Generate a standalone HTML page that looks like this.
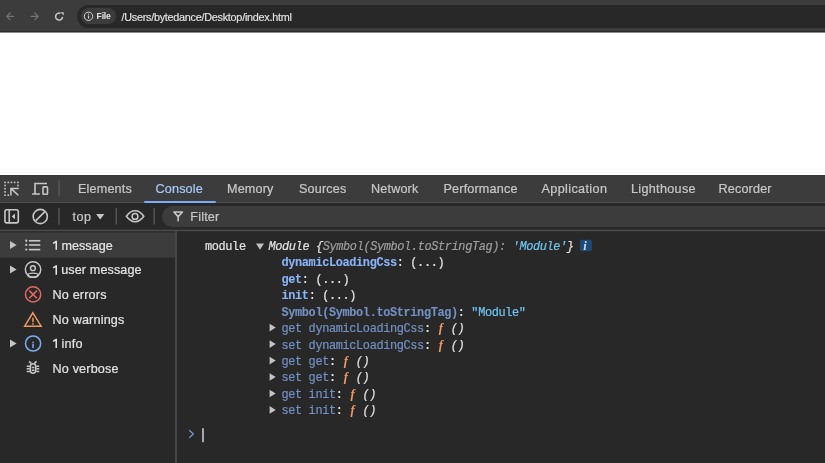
<!DOCTYPE html>
<html><head><meta charset="utf-8">
<style>
*{box-sizing:border-box}
html,body{margin:0;padding:0}
body{width:825px;height:463px;overflow:hidden;position:relative;background:#fff;font-family:"Liberation Sans",sans-serif}
#root{position:absolute;left:0;top:0;width:825px;height:463px;will-change:transform;background:#fff;overflow:hidden}
.a{position:absolute}
.t{position:absolute;white-space:pre;line-height:15px;font-size:12.6px;letter-spacing:0.18px;-webkit-text-stroke:0.22px currentColor}
.m{position:absolute;white-space:pre;font-family:"Liberation Mono",monospace;font-size:11.9px;letter-spacing:-0.355px;line-height:16px;color:#e3e3e3;-webkit-text-stroke:0.2px currentColor}
.m b{-webkit-text-stroke:0.1px currentColor}
.f{display:inline-block;width:6.4px;font-family:"Liberation Serif",serif;font-style:italic;font-weight:bold;font-size:12.5px;color:#f29766;text-align:center;-webkit-text-stroke:0}
svg{position:absolute;overflow:visible}
.n1{letter-spacing:-0.8px}
</style></head><body>
<div id="root">
<!-- chrome toolbar -->
<div class="a" style="left:0;top:0;width:825px;height:31px;background:#3c3c3c"></div>
<div class="a" style="left:0;top:31px;width:825px;height:2px;background:linear-gradient(#2a2a2a 0,#2a2a2a 50%,#8a8a8a 50%)"></div>
<svg style="left:0;top:0" width="80" height="32">
  <g fill="none" stroke="#747474" stroke-width="1.2" stroke-linecap="round" stroke-linejoin="round">
    <path d="M6.7 16.4H13.6M10.1 13L6.7 16.4L10.1 19.8"/>
    <path d="M31.3 16.4H38.2M34.8 13L38.2 16.4L34.8 19.8"/>
  </g>
  <g fill="none" stroke="#c7c7c7" stroke-width="1.5">
    <path d="M60.58 13.43A3.5 3.5 0 1 0 62.59 16.91"/>
  </g>
  <path d="M60.6 12.2H63.7V15.4Z" fill="#c7c7c7"/>
</svg>
<div class="a" style="left:77px;top:5px;width:800px;height:23px;border-radius:11.5px;background:#282828"></div>
<div class="a" style="left:81px;top:8.4px;width:35px;height:16px;border-radius:8px;background:#3c3c3c"></div>
<svg style="left:0;top:0" width="100" height="32">
  <circle cx="88.5" cy="16.3" r="4.2" fill="none" stroke="#d0d0d0" stroke-width="1"/>
  <rect x="88" y="15.6" width="1.1" height="3.1" fill="#d0d0d0"/>
  <rect x="88" y="13.6" width="1.1" height="1.1" fill="#d0d0d0"/>
</svg>
<div class="t" style="left:96.6px;top:10.6px;font-size:8.6px;letter-spacing:-0.2px;line-height:10px;font-weight:bold;color:#e3e3e3;-webkit-text-stroke:0">File</div>
<div class="t" style="left:121.5px;top:10.5px;font-size:10.8px;letter-spacing:-0.25px;line-height:12px;color:#e3e3e3;-webkit-text-stroke:0.15px currentColor">/Users/bytedance/Desktop/index.html</div>

<!-- devtools -->
<div class="a" style="left:0;top:175px;width:825px;height:288px;background:#282828"></div>
<div class="a" style="left:0;top:175px;width:825px;height:27px;background:#3c3c3c"></div>
<div class="a" style="left:0;top:172px;width:825px;height:1px;background:#f7f7f7"></div>
<div class="a" style="left:0;top:175px;width:825px;height:1px;background:#373737"></div>
<div class="a" style="left:0;top:202px;width:825px;height:1px;background:#4e4e4e"></div>
<div class="a" style="left:0;top:229px;width:825px;height:3px;background:linear-gradient(#333 0,#333 33%,#4b4b4b 33%,#4b4b4b 66%,#2e2e2e 66%)"></div>
<!-- tab icons -->
<svg style="left:0;top:175px" width="70" height="27">
  <g fill="#c7c7c7">
    <rect x="4.2" y="6.6" width="1.6" height="1.6"/><rect x="7.5" y="6.6" width="1.6" height="1.6"/><rect x="10.6" y="6.6" width="1.6" height="1.6"/><rect x="13.8" y="6.6" width="1.6" height="1.6"/><rect x="17.1" y="6.6" width="1.6" height="1.6"/>
    <rect x="4.2" y="9.7" width="1.6" height="1.6"/><rect x="4.2" y="12.9" width="1.6" height="1.6"/><rect x="4.2" y="16.1" width="1.6" height="1.6"/><rect x="4.2" y="19.4" width="1.6" height="1.6"/>
    <rect x="7.5" y="19.4" width="1.6" height="1.6"/>
    <rect x="17.1" y="9.7" width="1.6" height="1.6"/>
  </g>
  <g fill="none" stroke="#c7c7c7" stroke-width="1.5">
    <path d="M10.9 20.5V13.4H18.8M11.4 13.9L18.3 20.3"/>
  </g>
  <g fill="none" stroke="#c7c7c7" stroke-width="1.6">
    <path d="M47 8.5H35V18.8M32.1 19H39.9"/>
    <rect x="43" y="11.9" width="4.5" height="7.3" rx="0.8"/>
  </g>
  <rect x="58.4" y="5.5" width="1.3" height="16.2" fill="#5b5b5b"/>
</svg>
<div class="t" style="left:78px;top:181.9px;color:#c7c7c7">Elements</div>
<div class="t" style="left:155.5px;top:181.9px;color:#a8c7fa">Console</div>
<div class="t" style="left:227px;top:181.9px;color:#c7c7c7">Memory</div>
<div class="t" style="left:299px;top:181.9px;color:#c7c7c7">Sources</div>
<div class="t" style="left:371px;top:181.9px;color:#c7c7c7">Network</div>
<div class="t" style="left:443.5px;top:181.9px;color:#c7c7c7">Performance</div>
<div class="t" style="left:541.5px;top:181.9px;color:#c7c7c7;letter-spacing:0.38px">Application</div>
<div class="t" style="left:631px;top:181.9px;color:#c7c7c7;letter-spacing:0.32px">Lighthouse</div>
<div class="t" style="left:718.5px;top:181.9px;color:#c7c7c7">Recorder</div>
<div class="a" style="left:143.5px;top:201px;width:72px;height:2px;border-radius:1px;background:#7cacf8"></div>

<!-- console toolbar -->
<svg style="left:0;top:203px" width="170" height="27">
  <g fill="none" stroke="#c7c7c7" stroke-width="1.6">
    <rect x="4.95" y="6.8" width="13.35" height="13.1" rx="1.9"/>
    <path d="M9.25 6.8V19.9"/>
    <circle cx="40.25" cy="13.5" r="7.1"/>
    <path d="M35.6 17.9L44.9 8.6"/>
  </g>
  <path d="M15 10.6V16.2L11.7 13.4Z" fill="#c7c7c7"/>
  <rect x="58.4" y="5" width="1.3" height="16.7" fill="#5b5b5b"/>
  <rect x="115.6" y="5" width="1.3" height="16.5" fill="#5b5b5b"/>
  <rect x="153.5" y="5" width="1.3" height="16.5" fill="#5b5b5b"/>
  <g fill="none" stroke="#c7c7c7" stroke-width="1.5">
    <path d="M126.4 13.3C129 9.6 131.8 7.85 135.1 7.85C138.4 7.85 141.2 9.6 143.8 13.3C141.2 17 138.4 18.75 135.1 18.75C131.8 18.75 129 17 126.4 13.3Z"/>
    <circle cx="135" cy="13.4" r="2.9"/>
  </g>
  <path d="M96.1 10.9H104.3L100.2 16.6Z" fill="#c7c7c7"/>
</svg>
<div class="t" style="left:72.4px;top:209.9px;color:#c7c7c7;letter-spacing:0.6px">top</div>
<div class="a" style="left:161.5px;top:206px;width:700px;height:21px;border-radius:10.5px;background:#3c3c3c"></div>
<svg style="left:0;top:203px" width="200" height="27">
  <g fill="none" stroke="#c7c7c7" stroke-width="1.6" stroke-linejoin="round">
    <path d="M173.9 9H182.4L178.15 13.6Z"/>
    <path d="M178.15 13.6V18.3"/>
  </g>
</svg>
<div class="t" style="left:190.3px;top:209.9px;color:#c7c7c7">Filter</div>

<!-- sidebar -->
<div class="a" style="left:175px;top:231px;width:2px;height:232px;background:#464646"></div>
<div class="a" style="left:0;top:232px;width:175px;height:26px;background:linear-gradient(#333 0,#333 1px,#3c3c3c 1px,#3c3c3c 25px,#333 25px)"></div>

<!-- sidebar items -->
<svg style="left:0;top:231px" width="176" height="160">
  <g fill="#c4c4c4">
    <path d="M10 9.9V17.9L16.6 13.9Z"/>
    <path d="M10 34.4V42.4L16.6 38.4Z"/>
    <path d="M10 108.4V116.4L16.6 112.4Z"/>
  </g>
  <g fill="#c7c7c7">
    <circle cx="26.25" cy="9.75" r="1.15"/><circle cx="26.25" cy="13.95" r="1.15"/><circle cx="26.25" cy="18.6" r="1.15"/>
    <rect x="28.9" y="8.95" width="11.4" height="1.6"/><rect x="28.9" y="13.15" width="11.4" height="1.6"/><rect x="28.9" y="17.8" width="11.4" height="1.6"/>
  </g>
  <g fill="none" stroke="#c7c7c7" stroke-width="1.45">
    <circle cx="33.05" cy="38.55" r="7.7"/>
    <circle cx="32.9" cy="37.2" r="2.4"/>
    <ellipse cx="33" cy="44.2" rx="5.1" ry="2.1"/>
  </g>
  <g fill="none" stroke="#e46962" stroke-width="1.5">
    <circle cx="33.1" cy="63.4" r="7.6"/>
    <path d="M29.3 59.6L36.9 67.2M36.9 59.6L29.3 67.2"/>
  </g>
  <g fill="none" stroke="#f09a5e" stroke-width="1.5" stroke-linejoin="miter">
    <path d="M32.9 81.8L41.1 95.2H24.7Z"/>
  </g>
  <rect x="32.2" y="86.8" width="1.5" height="4.4" fill="#f09a5e"/>
  <rect x="32.2" y="92.2" width="1.5" height="1.5" fill="#f09a5e"/>
  <g fill="none" stroke="#7cacf8" stroke-width="1.5">
    <circle cx="33.1" cy="112.5" r="7.6"/>
  </g>
  <rect x="32.3" y="110.6" width="1.5" height="1.5" fill="#7cacf8"/>
  <rect x="32.3" y="112.7" width="1.5" height="4.4" fill="#7cacf8"/>
  <g fill="none" stroke="#c7c7c7" stroke-width="1.55">
    <path d="M29 130.4L31.3 132.4M36.6 130.4L34.3 132.4"/>
    <rect x="30.3" y="132.75" width="5.4" height="9.5" rx="2.7"/>
    <path d="M26.7 135.2H29.8M26.7 137.8H29.8M26.7 140.4H29.8M36.3 135.2H39.2M36.3 137.8H39.2M36.3 140.4H39.2M31.7 136.4H34.4M31.7 139.2H34.4"/>
  </g>
</svg>
<svg style="left:0;top:0" width="70" height="360"><g fill="none" stroke="#e3e3e3" stroke-width="1.55" stroke-linejoin="round"><path d="M53.1 243.3L56.25 241.3V249.8"/><path d="M53.1 267.8L56.25 265.8V274.8"/><path d="M53.1 341.3L56.25 339.3V348.1"/></g></svg>
<div class="t" style="left:61.4px;top:238.9px;color:#e3e3e3;letter-spacing:0.06px">message</div>
<div class="t" style="left:61.2px;top:263.2px;color:#e3e3e3;letter-spacing:0.12px">user message</div>
<div class="t" style="left:52.5px;top:287.6px;color:#e3e3e3">No errors</div>
<div class="t" style="left:52.5px;top:312.7px;color:#e3e3e3">No warnings</div>
<div class="t" style="left:61.6px;top:337.3px;color:#e3e3e3">info</div>
<div class="t" style="left:52.5px;top:361.8px;color:#e3e3e3">No verbose</div>

<!-- console content -->
<div class="m" style="left:205px;top:238.5px">module</div>
<div class="m" style="left:268.5px;top:238.5px"><i>Module {<span style="color:#9e9e9e">Symbol(Symbol.toStringTag): </span><span style="color:#6fc5f2">'Module'</span>}</i></div>
<svg style="left:0;top:231px" width="600" height="232">
  <path d="M256 12.6H264L260 18.8Z" fill="#c0c0c0"/>
  <rect x="580" y="8.8" width="11.8" height="11.5" rx="2" fill="#1e4a78"/>
  <g fill="#c4c4c4">
    <path d="M269.6 92.8V100.4L275.7 96.6Z"/>
    <path d="M269.6 109.3V116.9L275.7 113.1Z"/>
    <path d="M269.6 125.8V133.4L275.7 129.6Z"/>
    <path d="M269.6 142.2V149.8L275.7 146Z"/>
    <path d="M269.6 158.7V166.3L275.7 162.5Z"/>
    <path d="M269.6 175.1V182.7L275.7 178.9Z"/>
  </g>
  <path d="M189.2 199.2L193.4 203L189.2 206.8" fill="none" stroke="#7594c8" stroke-width="1.3"/>
  <rect x="202.2" y="197.2" width="1.6" height="14" fill="#c7c7c7"/>
</svg>
<div class="m" style="left:583.2px;top:238.3px;font-family:'Liberation Serif',serif;font-style:italic;font-weight:bold;font-size:12.5px;letter-spacing:0;color:#c8dcf8;-webkit-text-stroke:0">i</div>
<div class="m" style="left:281.5px;top:255px"><b style="color:#8ab4f8">dynamicLoadingCss</b>: (...)</div>
<div class="m" style="left:281.5px;top:272.3px"><b style="color:#8ab4f8">get</b>: (...)</div>
<div class="m" style="left:281.5px;top:287.9px"><b style="color:#8ab4f8">init</b>: (...)</div>
<div class="m" style="left:281.5px;top:305px"><b style="color:#7391c4">Symbol(Symbol.toStringTag)</b>: <span style="color:#6fc5f2">"Module"</span></div>
<div class="m" style="left:281.5px;top:320px"><span style="color:#7391c4">get dynamicLoadingCss</span>: <span class="f">f</span> <i>()</i></div>
<div class="m" style="left:281.5px;top:336.5px"><span style="color:#7391c4">set dynamicLoadingCss</span>: <span class="f">f</span> <i>()</i></div>
<div class="m" style="left:281.5px;top:353px"><span style="color:#7391c4">get get</span>: <span class="f">f</span> <i>()</i></div>
<div class="m" style="left:281.5px;top:369.4px"><span style="color:#7391c4">set get</span>: <span class="f">f</span> <i>()</i></div>
<div class="m" style="left:281.5px;top:386px"><span style="color:#7391c4">get init</span>: <span class="f">f</span> <i>()</i></div>
<div class="m" style="left:281.5px;top:402.3px"><span style="color:#7391c4">set init</span>: <span class="f">f</span> <i>()</i></div>
</div>
</body></html>
